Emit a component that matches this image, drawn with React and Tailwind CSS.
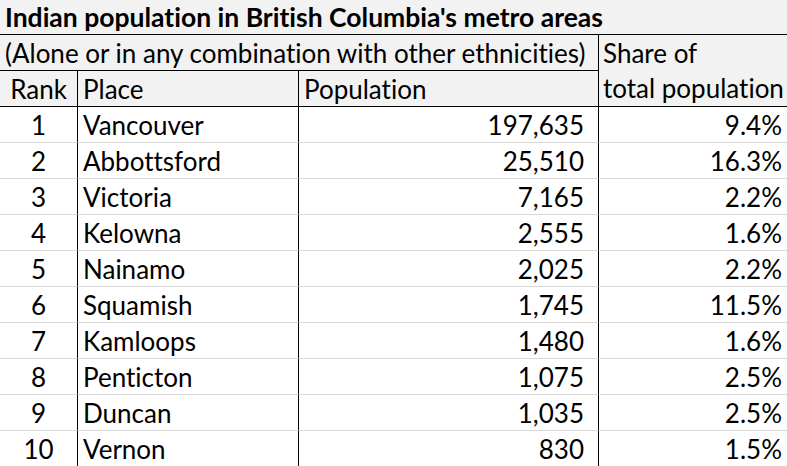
const rows = [
  [1, "Vancouver", "197,635", "9.4%"],
  [2, "Abbottsford", "25,510", "16.3%"],
  [3, "Victoria", "7,165", "2.2%"],
  [4, "Kelowna", "2,555", "1.6%"],
  [5, "Nainamo", "2,025", "2.2%"],
  [6, "Squamish", "1,745", "11.5%"],
  [7, "Kamloops", "1,480", "1.6%"],
  [8, "Penticton", "1,075", "2.5%"],
  [9, "Duncan", "1,035", "2.5%"],
  [10, "Vernon", "830", "1.5%"],
];

export default function App() {
  return (
    <div
      className="h-[466px] w-[787px] overflow-hidden bg-white text-[26px] leading-none text-black [font-variant-ligatures:none]"
      style={{ fontFamily: "Lato, 'Open Sans', sans-serif" }}
    >
      <div className="grid grid-cols-[77px_221px_300px_189px]">
        <div className="col-span-4 flex h-[35px] items-center border-b border-black bg-[#f2f2f2] pl-[5px] text-[26.5px] font-bold">
          Indian population in British Columbia's metro areas
        </div>

        <div className="col-span-3 flex h-[36px] items-center border-b border-black bg-[#f2f2f2] pl-[5px]">
          (Alone or in any combination with other ethnicities)
        </div>
        <div className="row-span-2 flex flex-col justify-between border-b border-l border-black bg-[#f2f2f2] pl-[4px] py-[5px]">
          <span>Share of</span>
          <span>total population</span>
        </div>

        <div className="flex h-[36px] items-center justify-center border-b border-black bg-[#f2f2f2]">
          Rank
        </div>
        <div className="flex h-[36px] items-center border-b border-l border-black bg-[#f2f2f2] pl-[5px]">
          Place
        </div>
        <div className="flex h-[36px] items-center border-b border-l border-black bg-[#f2f2f2] pl-[5px]">
          Population
        </div>

        {rows.map(([rank, place, pop, share], i) => {
          const line = i < rows.length - 1 ? "border-b border-b-[#d9d9d9]" : "";
          return (
            <div key={rank} className="contents">
              <div className={`flex h-[36px] items-center justify-center ${line}`}>
                {rank}
              </div>
              <div className={`flex h-[36px] items-center border-l border-l-black pl-[5px] ${line}`}>
                {place}
              </div>
              <div className={`flex h-[36px] items-center justify-end border-l border-l-black pr-[14px] ${line}`}>
                {pop}
              </div>
              <div className={`flex h-[36px] items-center justify-end border-l border-l-black pr-[5px] ${line}`}>
                {share}
              </div>
            </div>
          );
        })}
      </div>
    </div>
  );
}
